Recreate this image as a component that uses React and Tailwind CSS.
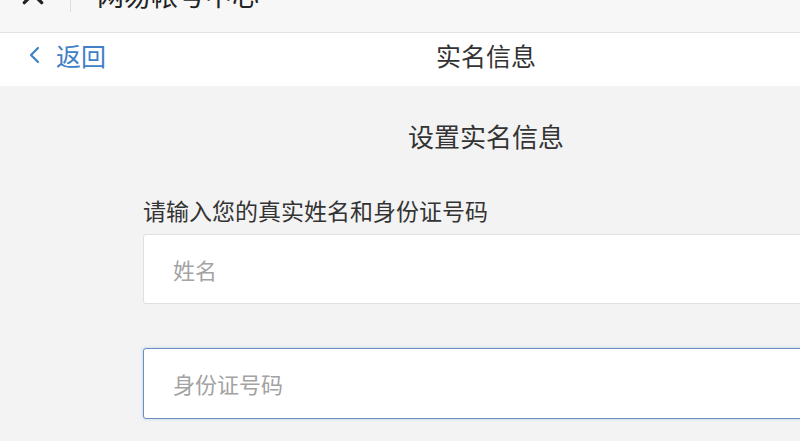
import React from 'react';

const font = { fontFamily: '"Noto Sans CJK SC", "Noto Sans", sans-serif' };

export default function App() {
    return (
        <div className="w-[800px] h-[441px] overflow-hidden bg-[#f3f3f3]" style={font}>
            <div className="w-[972px]">
                {/* app top bar, cut off by the screenshot */}
                <div className="h-[77px] -mt-[44px] bg-[#f7f7f7] border-b border-[#e2e2e2] flex items-center">
                    <svg className="ml-[20px] w-[26px] h-[26px] text-[#222]" viewBox="0 0 24 24" fill="none" stroke="currentColor" strokeWidth="3" strokeLinecap="round">
                        <path d="M4 4l16 16M20 4L4 20" />
                    </svg>
                    <div className="ml-[24px] w-px h-[36px] bg-[#dcdcdc]"></div>
                    <span className="ml-[26px] text-[27px] text-[#222] leading-none">网易帐号中心</span>
                </div>

                {/* nav */}
                <div className="relative h-[53px] bg-white">
                    <div className="absolute left-[27px] top-[4px] flex items-center text-[#3f80c6]">
                        <svg className="w-[16px] h-[18px]" viewBox="0 0 16 18" fill="none" stroke="currentColor" strokeWidth="2.2" strokeLinecap="round" strokeLinejoin="round">
                            <path d="M11 2L4 9l7 7" />
                        </svg>
                        <span className="ml-[13px] text-[25px] leading-[36px]">返回</span>
                    </div>
                    <div className="pt-[4px] text-center text-[25px] leading-[36px] text-[#333]">实名信息</div>
                </div>

                {/* content */}
                <div className="pt-[31px] px-[143px]">
                    <div className="text-center text-[26px] leading-[38px] text-[#333]">设置实名信息</div>
                    <div className="mt-[40px] text-[23px] leading-[30px] text-[#333]">请输入您的真实姓名和身份证号码</div>
                    <div className="mt-[9px] h-[70px] bg-white border border-[#e0e0e0] rounded-[3px] flex items-center pl-[29px] text-[22px] text-[#a3a3a3]">
                        姓名
                    </div>
                    <div className="mt-[44px] h-[71px] bg-white border-[1.5px] border-[#6a8fc0] rounded-[3px] shadow-[0_0_3px_rgba(120,170,220,0.5)] flex items-center pl-[29px] text-[22px] text-[#a3a3a3]">
                        身份证号码
                    </div>
                </div>
            </div>
        </div>
    );
}
